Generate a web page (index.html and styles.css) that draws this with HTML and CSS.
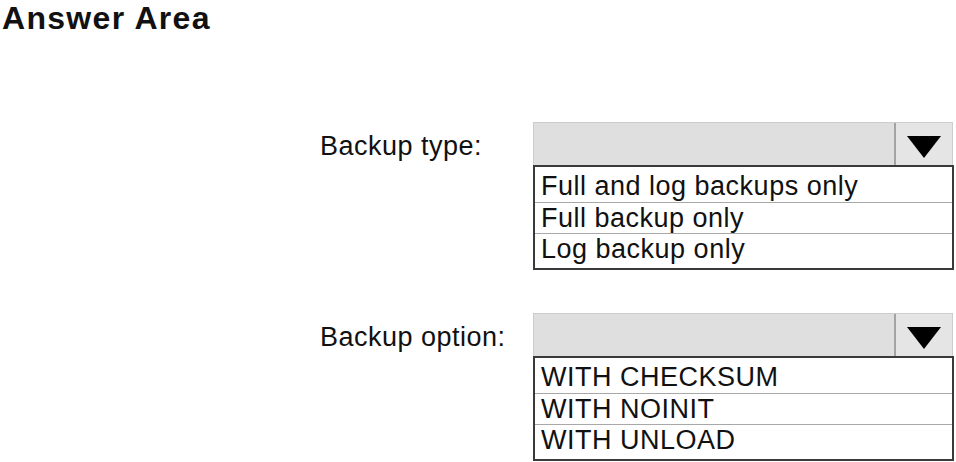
FILE: index.html
```html
<!DOCTYPE html>
<html lang="en">
<head>
    <meta charset="UTF-8">
    <meta name="viewport" content="width=device-width, initial-scale=1.0">
    <title>Answer Area</title>
    <link rel="stylesheet" href="styles.css">
</head>
<body>
    <h1>Answer Area</h1>
    <div class="answer">
        <div class="group">
            <div class="label">Backup type:</div>
            <div class="dropdown">
                <div class="select">
                    <div class="field"></div>
                    <div class="arrow"><span class="triangle"></span></div>
                </div>
                <ul class="options">
                    <li>Full and log backups only</li>
                    <li>Full backup only</li>
                    <li>Log backup only</li>
                </ul>
            </div>
        </div>
        <div class="group">
            <div class="label">Backup option:</div>
            <div class="dropdown">
                <div class="select">
                    <div class="field"></div>
                    <div class="arrow"><span class="triangle"></span></div>
                </div>
                <ul class="options">
                    <li>WITH CHECKSUM</li>
                    <li>WITH NOINIT</li>
                    <li>WITH UNLOAD</li>
                </ul>
            </div>
        </div>
    </div>
</body>
</html>
```

FILE: styles.css
```css
body {
    font-family: "Liberation Sans", Arial, sans-serif;
    background-color: #fff;
    color: #111;
    margin: 0;
    padding: 0;
}

h1 {
    margin: 0;
    padding-left: 2px;
    font-size: 32px;
    line-height: 36px;
    letter-spacing: 1.3px;
    font-weight: bold;
}

.answer {
    display: flex;
    flex-direction: column;
    gap: 43px;
    padding: 86px 0 0 320px;
}

.group {
    display: flex;
    align-items: flex-start;
}

.label {
    width: 213px;
    height: 43px;
    line-height: 43px;
    padding-top: 3px;
    box-sizing: border-box;
    font-size: 27px;
    letter-spacing: 0.5px;
}

.dropdown {
    width: 421px;
}

.select {
    display: flex;
    width: 420px;
    height: 43px;
    box-sizing: border-box;
    border: 1px solid #cdcdcd;
    border-bottom: none;
    background-color: #dfdfdf;
}

.field {
    flex: 1;
}

.arrow {
    display: flex;
    justify-content: center;
    align-items: center;
    width: 58px;
    padding: 5px 1px 0 0;
    box-sizing: border-box;
    border-left: 2px solid #a3a3a3;
    background-color: #e5e5e5;
}

.triangle {
    width: 0;
    height: 0;
    border-left: 17px solid transparent;
    border-right: 17px solid transparent;
    border-top: 22px solid #000;
}

.options {
    list-style: none;
    margin: 0;
    padding: 4px 0;
    border: 2px solid #3a3a3a;
}

    .options li {
        height: 31px;
        box-sizing: border-box;
        line-height: 30px;
        padding-left: 6px;
        font-size: 27px;
        letter-spacing: 0.5px;
        white-space: nowrap;
    }

    .options li + li {
        border-top: 1px solid #a8a8a8;
    }
```
